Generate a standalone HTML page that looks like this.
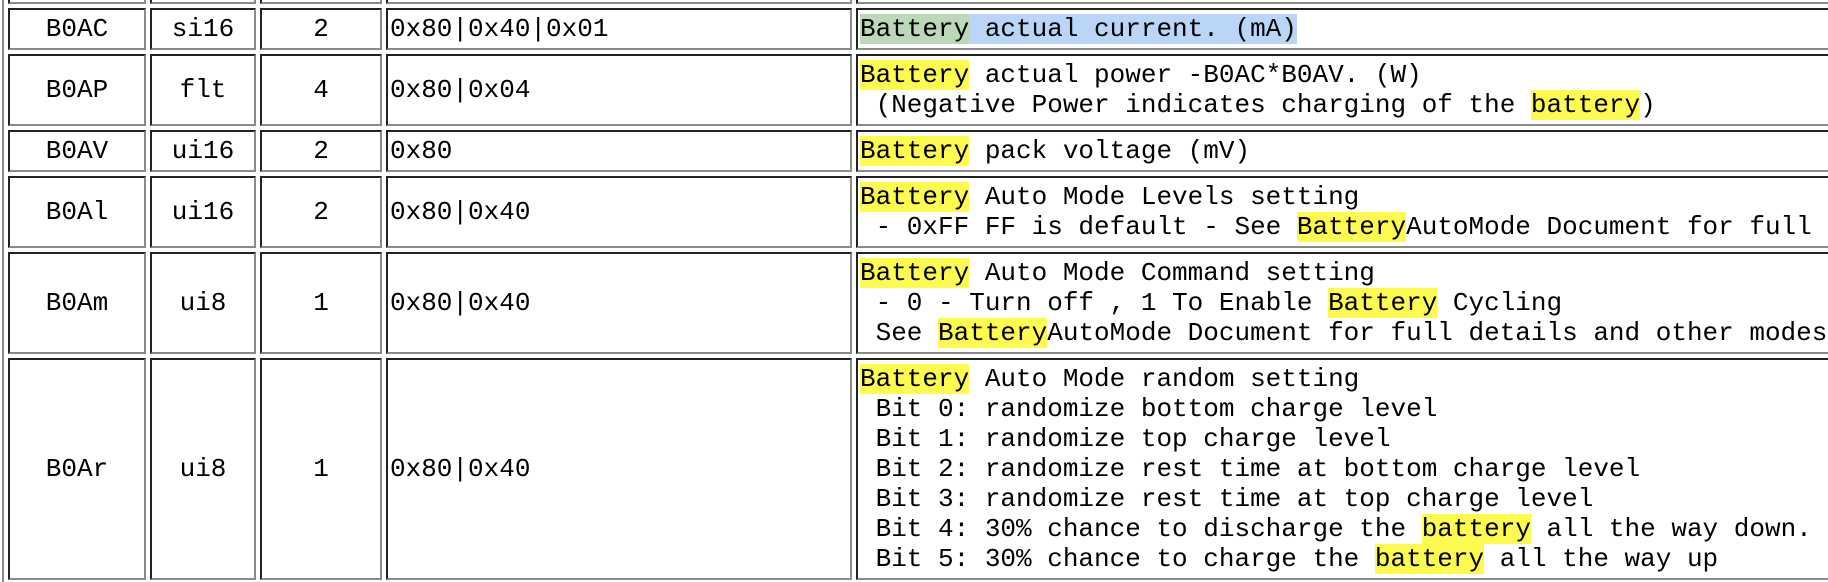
<!DOCTYPE html>
<html><head><meta charset="utf-8"><style>
html,body{margin:0;padding:0;background:#fff;width:1828px;height:582px;overflow:hidden;position:relative}
.c{position:absolute;box-sizing:border-box;border:2px solid;border-color:#222 #8a8a8a #8a8a8a #222;display:flex;align-items:center;font-family:"Liberation Mono",monospace;font-size:26px;line-height:30px;color:#000;padding:4px 2px;white-space:pre;overflow:hidden}
.w{left:856px;width:972px;border-right:none}
.ctr{justify-content:center}
.y{background:#fdfb50}
.g{background:#bcd8b9}
.b{background:#b9d6f7}
.ol{position:absolute;left:2px;top:0;width:2px;height:582px;background:#8a8a8a}
.t{position:absolute;top:0;height:4px;border:2px solid #8a8a8a;border-top:none;border-left-color:#222;box-sizing:border-box}
</style></head><body>
<div class="ol"></div>
<div class="t" style="left:8px;width:138px"></div>
<div class="t" style="left:150px;width:106px"></div>
<div class="t" style="left:260px;width:122px"></div>
<div class="t" style="left:386px;width:466px"></div>
<div class="t" style="left:856px;width:972px;border-right:none"></div>

<div class="c ctr" style="left:8px;top:8px;width:138px;height:42px">B0AC</div>
<div class="c ctr" style="left:150px;top:8px;width:106px;height:42px">si16</div>
<div class="c ctr" style="left:260px;top:8px;width:122px;height:42px">2</div>
<div class="c" style="left:386px;top:8px;width:466px;height:42px">0x80|0x40|0x01</div>
<div class="c w" style="top:8px;height:42px"><span class="g">Battery</span><span class="b"> actual current. (mA)</span></div>

<div class="c ctr" style="left:8px;top:54px;width:138px;height:72px">B0AP</div>
<div class="c ctr" style="left:150px;top:54px;width:106px;height:72px">flt</div>
<div class="c ctr" style="left:260px;top:54px;width:122px;height:72px">4</div>
<div class="c" style="left:386px;top:54px;width:466px;height:72px">0x80|0x04</div>
<div class="c w" style="top:54px;height:72px"><div><span class="y">Battery</span> actual power -B0AC*B0AV. (W)
 (Negative Power indicates charging of the <span class="y">battery</span>)</div></div>

<div class="c ctr" style="left:8px;top:130px;width:138px;height:42px">B0AV</div>
<div class="c ctr" style="left:150px;top:130px;width:106px;height:42px">ui16</div>
<div class="c ctr" style="left:260px;top:130px;width:122px;height:42px">2</div>
<div class="c" style="left:386px;top:130px;width:466px;height:42px">0x80</div>
<div class="c w" style="top:130px;height:42px"><span class="y">Battery</span> pack voltage (mV)</div>

<div class="c ctr" style="left:8px;top:176px;width:138px;height:72px">B0Al</div>
<div class="c ctr" style="left:150px;top:176px;width:106px;height:72px">ui16</div>
<div class="c ctr" style="left:260px;top:176px;width:122px;height:72px">2</div>
<div class="c" style="left:386px;top:176px;width:466px;height:72px">0x80|0x40</div>
<div class="c w" style="top:176px;height:72px"><div><span class="y">Battery</span> Auto Mode Levels setting
 - 0xFF FF is default - See <span class="y">Battery</span>AutoMode Document for full details</div></div>

<div class="c ctr" style="left:8px;top:252px;width:138px;height:102px">B0Am</div>
<div class="c ctr" style="left:150px;top:252px;width:106px;height:102px">ui8</div>
<div class="c ctr" style="left:260px;top:252px;width:122px;height:102px">1</div>
<div class="c" style="left:386px;top:252px;width:466px;height:102px">0x80|0x40</div>
<div class="c w" style="top:252px;height:102px"><div><span class="y">Battery</span> Auto Mode Command setting
 - 0 - Turn off , 1 To Enable <span class="y">Battery</span> Cycling
 See <span class="y">Battery</span>AutoMode Document for full details and other modes</div></div>

<div class="c ctr" style="left:8px;top:358px;width:138px;height:222px">B0Ar</div>
<div class="c ctr" style="left:150px;top:358px;width:106px;height:222px">ui8</div>
<div class="c ctr" style="left:260px;top:358px;width:122px;height:222px">1</div>
<div class="c" style="left:386px;top:358px;width:466px;height:222px">0x80|0x40</div>
<div class="c w" style="top:358px;height:222px"><div><span class="y">Battery</span> Auto Mode random setting
 Bit 0: randomize bottom charge level
 Bit 1: randomize top charge level
 Bit 2: randomize rest time at bottom charge level
 Bit 3: randomize rest time at top charge level
 Bit 4: 30% chance to discharge the <span class="y">battery</span> all the way down.
 Bit 5: 30% chance to charge the <span class="y">battery</span> all the way up</div></div>
</body></html>
